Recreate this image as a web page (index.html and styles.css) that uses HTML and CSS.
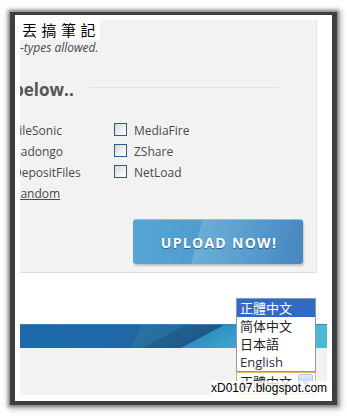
FILE: index.html
```html
<!DOCTYPE html>
<html>
<head>
<meta charset="utf-8">
<link rel="stylesheet" href="styles.css">
</head>
<body>
<div class="frame">
  <div class="screen">
    <section class="panel">
      <div class="clip">
        <div class="clip-inner">
          <p class="note">-types allowed.</p>
          <div class="heading-row">
            <h2 class="heading">below..</h2>
            <span class="rule"></span>
          </div>
          <div class="hosts">
            <div class="col">
              <span class="host">FileSonic</span>
              <span class="host">Badongo</span>
              <span class="host">DepositFiles</span>
              <span class="host"><a class="random">Random</a></span>
            </div>
            <div class="col">
              <label class="host"><span class="box"></span>MediaFire</label>
              <label class="host"><span class="box"></span>ZShare</label>
              <label class="host"><span class="box"></span>NetLoad</label>
            </div>
          </div>
        </div>
      </div>
      <div class="actions">
        <button class="upload">UPLOAD NOW!</button>
      </div>
      <div class="title">丟搞筆記</div>
    </section>
    <div class="banner"></div>
    <div class="footer">
      <div class="select">
        <ul class="options">
          <li class="active">正體中文</li>
          <li>简体中文</li>
          <li>日本語</li>
          <li class="latin">English</li>
        </ul>
        <span class="value">正體中文</span>
        <span class="arrow"><svg width="15" height="15" viewBox="0 0 15 15"><path d="M4.5 6 L7.5 9 L10.5 6" fill="none" stroke="#4d5f80" stroke-width="1.6"/></svg></span>
      </div>
    </div>
    <div class="watermark">xD0107.blogspot.com</div>
  </div>
</div>
</body>
</html>
```
FILE: styles.css
```css
* { box-sizing: border-box; }
html, body { margin: 0; padding: 0; background: #fff; }
body {
  width: 347px;
  height: 416px;
  overflow: hidden;
  font-family: "Open Sans", sans-serif;
}
.frame {
  margin: 12px 0 0 10px;
  width: 327px;
  border: 5px solid #3e3e3e;
  border-top-width: 3px;
  border-bottom-width: 4px;
  box-shadow: 0 0 3px 2px rgba(0,0,0,.35), 1px 1px 6px 3px rgba(0,0,0,.25);
}
.screen {
  position: relative;
  background: #fff;
  padding: 5px 5px 6px;
}
.panel {
  position: relative;
  width: 297px;
  height: 253px;
  background: #f2f2f2;
  border-right: 1px solid #e2e2e2;
  border-bottom: 1px solid #dcdcdc;
}
.clip { overflow: hidden; padding-top: 20px; }
.clip-inner { margin-left: -7px; }
.note {
  margin: 0 0 0 7px;
  font-style: italic;
  font-size: 12px;
  line-height: 16px;
  color: #3f4a58;
}
.heading-row { display: flex; margin-top: 23px; height: 22px; }
.heading {
  margin: 0;
  font-size: 17px;
  line-height: 22px;
  font-weight: 700;
  color: #555;
}
.rule {
  width: 188px;
  height: 1px;
  background: #e3e3e3;
  margin: 8px 0 0 16px;
}
.hosts { display: flex; margin-top: 19px; }
.col { display: flex; flex-direction: column; width: 101px; }
.host {
  display: flex;
  align-items: center;
  height: 21px;
  font-size: 12px;
  line-height: 21px;
  color: #4a4a4a;
}
.random { text-decoration: underline; }
.box {
  width: 13px;
  height: 13px;
  margin: -2px 7px 0 0;
  border: 1px solid #2b5b87;
  background: linear-gradient(135deg, #d6d6d2, #fbfbfb 80%);
}
.actions {
  display: flex;
  justify-content: flex-end;
  padding-right: 13px;
  margin-top: 15px;
}
.upload {
  width: 170px;
  height: 45px;
  border: 0;
  border-top: 1px solid #7cc6e6;
  border-radius: 3px;
  background:
    linear-gradient(104deg, rgba(255,255,255,0) 0 38%, rgba(255,255,255,.16) 38.5%, rgba(255,255,255,0) 95%),
    linear-gradient(90deg, #56a5d5 0%, #4f9ccf 45%, #4788c0 100%);
  box-shadow: 1px 2px 2px rgba(0,0,0,.2);
  color: #fff;
  font-family: "Open Sans", sans-serif;
  font-weight: 700;
  font-size: 14px;
  letter-spacing: 1.3px;
  text-shadow: 0 1px 1px rgba(0,40,80,.55);
  padding: 0 0 0 2px;
}
.title {
  position: absolute;
  top: 0;
  left: 0;
  width: 80px;
  height: 20px;
  padding-left: 2px;
  background: #fff;
  color: #000;
  font-family: "Noto Sans CJK TC", sans-serif;
  font-size: 15px;
  line-height: 20px;
  letter-spacing: 4.5px;
  white-space: nowrap;
  overflow: hidden;
}
.banner {
  margin-top: 51px;
  width: 307px;
  height: 24px;
  border-top: 1px solid #3c7fb0;
  background:
    linear-gradient(152deg, rgba(0,0,0,0) 0 58%, #2f8fc2 58.5%, #4db9d6 85%),
    linear-gradient(152deg, rgba(0,0,0,0) 0 47%, rgba(0,20,60,.15) 47.5%, rgba(0,20,60,.22) 58%),
    linear-gradient(118deg, #1d69a9 0%, #1f68a4 38%, #27709f 38.5%, #1f6498 100%);
}
.footer {
  position: relative;
  height: 47px;
  background: #f2f2f2;
  padding: 24px 0 0 216px;
}
.select {
  position: relative;
  display: flex;
  align-items: flex-start;
  width: 80px;
  height: 22px;
  border: 1px solid #e2b85c;
  background: #fff;
}
.value {
  flex: 1;
  padding-left: 3px;
  font-family: "Noto Sans CJK TC", sans-serif;
  font-size: 13px;
  line-height: 18px;
  color: #222;
}
.arrow {
  width: 15px;
  height: 15px;
  margin: 1px 2px 0 0;
  border: 1px solid #b4c8ea;
  border-radius: 2px;
  background: linear-gradient(#dfe8fb, #b9cdf2);
  display: flex;
}
.options {
  position: absolute;
  left: -1px;
  bottom: calc(100% + 1px);
  width: 80px;
  margin: 0;
  padding: 0;
  list-style: none;
  border: 1px solid #7f9db9;
  background: #fff;
}
.options li {
  height: 18px;
  padding-left: 3px;
  font-family: "Noto Sans CJK TC", sans-serif;
  font-size: 13px;
  line-height: 18px;
  color: #222;
}
.options li.active { background: #316ac5; color: #fff; }
.options li.latin { font-family: "Open Sans", sans-serif; color: #3a2a4a; }
.watermark {
  position: absolute;
  right: 5px;
  bottom: 6px;
  width: 116px;
  height: 14px;
  background: rgba(255,255,255,.8);
  color: #000;
  font-family: "Liberation Sans", Arial, sans-serif;
  font-size: 12px;
  line-height: 14px;
  white-space: nowrap;
}
```
